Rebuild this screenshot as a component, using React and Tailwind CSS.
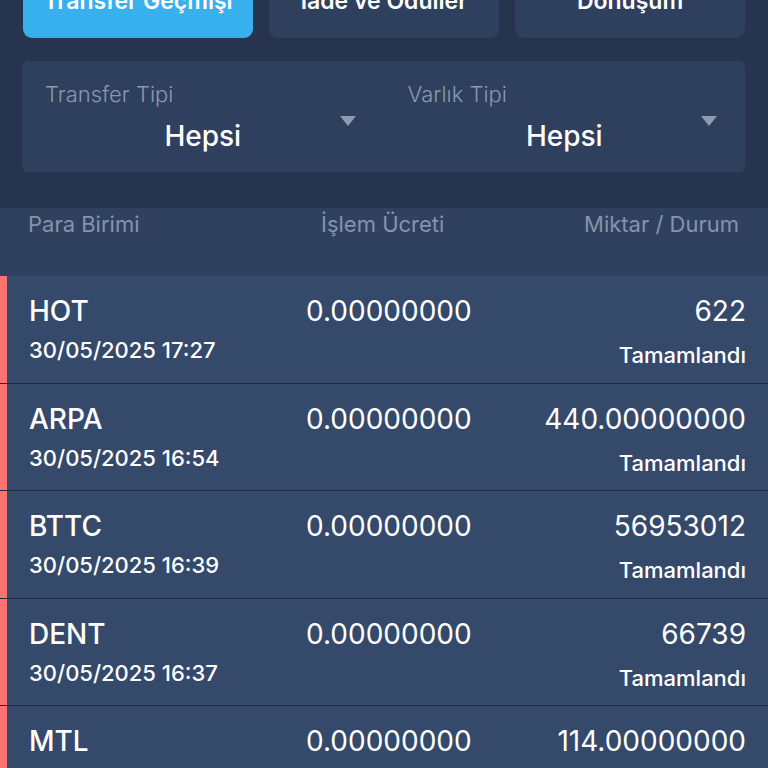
import React from 'react';

const rows = [
  { coin: 'HOT', date: '30/05/2025 17:27', fee: '0.00000000', amount: '622', status: 'Tamamlandı' },
  { coin: 'ARPA', date: '30/05/2025 16:54', fee: '0.00000000', amount: '440.00000000', status: 'Tamamlandı' },
  { coin: 'BTTC', date: '30/05/2025 16:39', fee: '0.00000000', amount: '56953012', status: 'Tamamlandı' },
  { coin: 'DENT', date: '30/05/2025 16:37', fee: '0.00000000', amount: '66739', status: 'Tamamlandı' },
  { coin: 'MTL', date: '30/05/2025 16:21', fee: '0.00000000', amount: '114.00000000', status: 'Tamamlandı' },
];

function Caret() {
  return (
    <svg width="16" height="10" viewBox="0 0 16 10" className="shrink-0">
      <path d="M0 0 H16 L8 10 Z" fill="#8e9bb2" />
    </svg>
  );
}

function FilterCol({ label, value, labelPad }) {
  return (
    <div className="relative flex-1">
      <div className={`text-[22px] font-light leading-[28px] text-[#8a98b0] ${labelPad}`}>{label}</div>
      <div className="mt-[11px] text-center text-[28px] font-medium leading-[34px] text-white">{value}</div>
      <div className="absolute right-[28px] top-[36px]">
        <Caret />
      </div>
    </div>
  );
}

export default function App() {
  return (
    <div className="h-[768px] w-[768px] overflow-hidden bg-[#27344f]" style={{ fontFamily: 'Inter, "Noto Sans", sans-serif' }}>
      <div className="px-[23px]">
        <div className="-mt-[42px] flex gap-[16px]">
          <div className="flex h-[80px] flex-1 items-center justify-center rounded-[9px] bg-[#38b0ee] pt-[6px] text-[23px] font-semibold text-white">Transfer Geçmişi</div>
          <div className="flex h-[80px] flex-1 items-center justify-center rounded-[9px] bg-[#2f3f5e] pt-[6px] text-[23px] font-semibold text-white">İade ve Ödüller</div>
          <div className="flex h-[80px] flex-1 items-center justify-center rounded-[9px] bg-[#2f3f5e] pt-[6px] text-[23px] font-semibold text-white">Dönüşüm</div>
        </div>
        <div className="mt-[23px] ml-[-1px] flex rounded-[6px] bg-[#2f3f5e] pt-[19px] pb-[19px]">
          <FilterCol label="Transfer Tipi" value="Hepsi" labelPad="pl-[23px]" />
          <FilterCol label="Varlık Tipi" value="Hepsi" labelPad="pl-[24px]" />
        </div>
      </div>

      <div className="mt-[36px] flex h-[68px] items-start bg-[#30415f] pl-[28px] pr-[29px] pt-[2px] text-[22px] leading-[28px] text-[#8593ab]">
        <div className="w-[293px]">Para Birimi</div>
        <div className="w-[125px] whitespace-nowrap">İşlem Ücreti</div>
        <div className="flex-1 text-right">Miktar / Durum</div>
      </div>

      <div>
        {rows.map((r) => (
          <div key={r.coin} className="flex h-[107.5px] border-b-[1.5px] border-[#1f2b42] bg-[#35496b]">
            <div className="w-[7px] shrink-0 bg-[#ff7373]" />
            <div className="flex flex-1 pl-[22px] pr-[22px] pt-[18px]">
              <div className="w-[277px]">
                <div className="text-[28px] font-medium leading-[34px] text-white">{r.coin}</div>
                <div className="mt-[8px] text-[22px] font-medium leading-[28px] text-white">{r.date}</div>
              </div>
              <div className="text-[28px] font-normal leading-[34px] text-white">{r.fee}</div>
              <div className="flex-1 text-right">
                <div className="text-[28px] font-normal leading-[34px] text-white">{r.amount}</div>
                <div className="mt-[13px] text-[22px] font-medium leading-[28px] text-white">{r.status}</div>
              </div>
            </div>
          </div>
        ))}
      </div>
    </div>
  );
}
